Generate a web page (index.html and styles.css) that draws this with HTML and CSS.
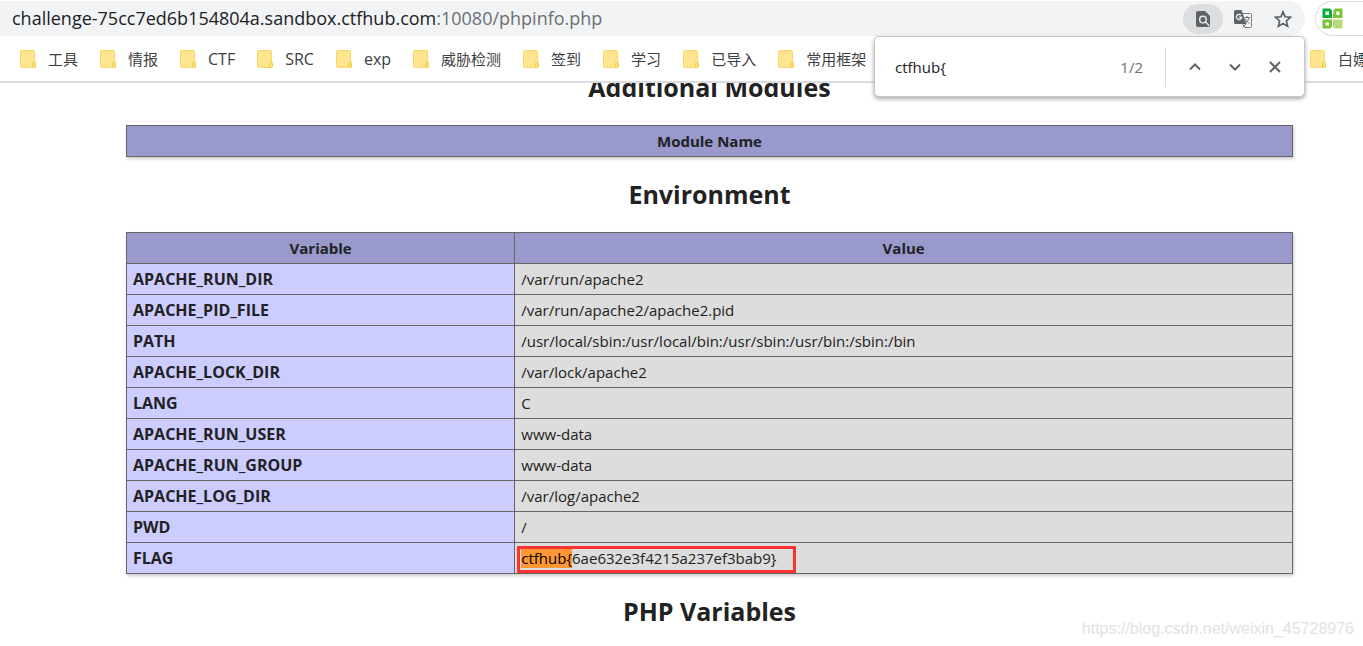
FILE: index.html
```html
<!DOCTYPE html>
<html lang="zh-CN">
<head>
<meta charset="utf-8">
<title>phpinfo()</title>
<link rel="stylesheet" href="styles.css">
</head>
<body>
<svg class="defs" width="0" height="0" aria-hidden="true">
  <symbol id="folder" viewBox="0 0 16 18">
    <path d="M1.5.5h12a1 1 0 0 1 1 1V12a1.500 1.500 0 0 1 1 1.500V16a1.500 1.500 0 0 1-1.500 1.500H1.500a1 1 0 0 1-1-1v-15a1 1 0 0 1 1-1z" fill="#ffe58f" stroke="#f9d768"/>
    <path d="M14.500 12c-1.500 0-2 .8-2 2v2c0 1 .5 1.500 1.500 1.500s1.500-.5 1.500-1.500v-2.500c0-.8-.3-1.300-1-1.500z" fill="#ffe27a" stroke="#f3c93f"/>
  </symbol>
</svg>
<header class="browser">
  <div class="toolbar">
    <div class="omnibox">
      <p class="url">challenge-75cc7ed6b154804a.sandbox.ctfhub.com<span class="path">:10080/phpinfo.php</span></p>
      <button class="tool active" aria-label="Find in page"><svg width="14" height="16" viewBox="0 0 14 16"><path d="M2 0h7l5 5v9.500a1.500 1.500 0 0 1-1.500 1.500H2a2 2 0 0 1-2-2V2a2 2 0 0 1 2-2z" fill="#5f6368"/><circle cx="7" cy="8.500" r="3.300" fill="#5f6368" stroke="#e8eaed" stroke-width="1.500"/><path d="M9.300 10.800l4 4" stroke="#e8eaed" stroke-width="1.500"/></svg></button>
      <button class="tool" aria-label="Translate"><svg width="18" height="18" viewBox="0 0 18 18"><path d="M7 3.500h9.500a1 1 0 0 1 1 1v12a1 1 0 0 1-1 1h-6l-2-4" fill="#f1f3f4" stroke="#7b7f83"/><path d="M1.500 0h6l1 3 4 11h-11A1.500 1.500 0 0 1 0 12.500v-11A1.500 1.500 0 0 1 1.500 0z" fill="#5f6368"/><path d="M7 5.200A2.600 2.600 0 1 0 7.600 7.200H5" fill="none" stroke="#f1f3f4" stroke-width="1.300"/><path d="M10.500 7.500H16M13 6v1.500M15 8c-.5 2-2 4-3.500 5M11.500 9c.8 2 2.500 3.500 4 4.500M9 17l3-3" fill="none" stroke="#6a6e72"/></svg></button>
      <button class="tool" aria-label="Bookmark this page"><svg width="18" height="18" viewBox="0 0 18 18"><path d="M9 1.800l2.100 5 5.400.5-4.100 3.600 1.200 5.300L9 13.400l-4.600 2.800 1.200-5.300-4.100-3.600 5.400-.5z" fill="none" stroke="#5f6368" stroke-width="1.700"/></svg></button>
    </div>
    <div class="extension">
      <svg width="21" height="21" viewBox="0 0 21 21"><path d="M2 2h5.500l1 1v5.500H2z" fill="none" stroke="#0caa41" stroke-width="3"/><path d="M13 3l1-1h5v6.500h-6.500z" fill="none" stroke="#7ac236" stroke-width="3"/><path d="M2 13h6.500v5l-1 1H2z" fill="none" stroke="#7ac236" stroke-width="3"/><path d="M11 11.500h9.500v8l-1 1H13l-2-2z" fill="#b5dc79"/></svg>
    </div>
  </div>
  <nav class="bookmarks" aria-label="Bookmarks">
    <a href="#"><svg><use href="#folder"/></svg>工具</a>
    <a href="#"><svg><use href="#folder"/></svg>情报</a>
    <a href="#" class="latin"><svg><use href="#folder"/></svg>CTF</a>
    <a href="#" class="latin"><svg><use href="#folder"/></svg>SRC</a>
    <a href="#" class="latin"><svg><use href="#folder"/></svg>exp</a>
    <a href="#"><svg><use href="#folder"/></svg>威胁检测</a>
    <a href="#"><svg><use href="#folder"/></svg>签到</a>
    <a href="#"><svg><use href="#folder"/></svg>学习</a>
    <a href="#"><svg><use href="#folder"/></svg>已导入</a>
    <a href="#"><svg><use href="#folder"/></svg>常用框架</a>
    <a href="#" class="last"><svg><use href="#folder"/></svg>白嫖</a>
  </nav>
  <form class="find">
    <input type="text" value="ctfhub{" aria-label="Find">
    <span class="count">1/2</span>
    <div class="find-buttons">
      <button type="button" aria-label="Previous"><svg width="14" height="14" viewBox="0 0 14 14"><path d="M2 9.500l5-5 5 5"/></svg></button>
      <button type="button" aria-label="Next"><svg width="14" height="14" viewBox="0 0 14 14"><path d="M2 4.500l5 5 5-5"/></svg></button>
      <button type="button" aria-label="Close"><svg width="14" height="14" viewBox="0 0 14 14"><path d="M2 2l10 10M12 2L2 12"/></svg></button>
    </div>
  </form>
</header>
<main class="page">
  <h2>Additional Modules</h2>
  <table>
    <thead><tr><th>Module Name</th></tr></thead>
  </table>
  <h2>Environment</h2>
  <table>
    <thead><tr><th class="name">Variable</th><th>Value</th></tr></thead>
    <tbody>
      <tr><th scope="row">APACHE_RUN_DIR</th><td>/var/run/apache2</td></tr>
      <tr><th scope="row">APACHE_PID_FILE</th><td>/var/run/apache2/apache2.pid</td></tr>
      <tr><th scope="row">PATH</th><td>/usr/local/sbin:/usr/local/bin:/usr/sbin:/usr/bin:/sbin:/bin</td></tr>
      <tr><th scope="row">APACHE_LOCK_DIR</th><td>/var/lock/apache2</td></tr>
      <tr><th scope="row">LANG</th><td>C</td></tr>
      <tr><th scope="row">APACHE_RUN_USER</th><td>www-data</td></tr>
      <tr><th scope="row">APACHE_RUN_GROUP</th><td>www-data</td></tr>
      <tr><th scope="row">APACHE_LOG_DIR</th><td>/var/log/apache2</td></tr>
      <tr><th scope="row">PWD</th><td>/</td></tr>
      <tr><th scope="row">FLAG</th><td><span class="flag"><mark>ctfhub{</mark>6ae632e3f4215a237ef3bab9}</span></td></tr>
    </tbody>
  </table>
  <h2>PHP Variables</h2>
</main>
<p class="watermark">https://blog.csdn.net/weixin_45728976</p>
</body>
</html>
```
FILE: styles.css
```css
* { box-sizing: border-box; }
body {
  margin: 0;
  min-height: 100vh;
  position: relative;
  overflow: hidden;
  background: #fff;
  color: #222;
  font: 15px/22px "Open Sans", "Noto Sans CJK SC", sans-serif;
}
.defs { position: absolute; }
button { border: 0; padding: 0; background: none; display: grid; place-items: center; }
p { margin: 0; }

.browser { position: relative; z-index: 1; background: #fff; border-bottom: 2px solid #dadce0; }
.toolbar { display: flex; gap: 10px; padding-top: 1px; }
.omnibox {
  flex: 1;
  display: flex;
  align-items: center;
  height: 35px;
  padding-left: 12px;
  padding-right: 2px;
  background: #f1f3f4;
  border-radius: 0 18px 18px 0;
}
.url { flex: 1; font-size: 18px; line-height: 35px; white-space: nowrap; color: #202124; }
.path { color: #6b6f73; }
.tool { width: 40px; height: 30px; border-radius: 15px; }
.tool.active { background: #dcdee0; }
.extension {
  width: 48px;
  height: 35px;
  padding: 6px;
  border: 1px solid #dadce0;
  border-right: 0;
  border-radius: 18px 0 0 18px;
}
.extension svg { display: block; }

.bookmarks { display: flex; gap: 22px; height: 45px; padding-left: 20px; align-items: center; }
.bookmarks a {
  display: flex;
  align-items: center;
  gap: 12px;
  flex: none;
  color: #3c4043;
  text-decoration: none;
  white-space: nowrap;
}
.bookmarks svg { width: 16px; height: 18px; flex: none; }
.bookmarks .latin { font-size: 16px; }
.bookmarks .last { width: 53px; margin-left: auto; }

.find {
  position: absolute;
  top: 36px;
  right: 58px;
  width: 431px;
  height: 61px;
  display: flex;
  align-items: center;
  padding-left: 20px;
  padding-right: 9px;
  background: #fff;
  border: 1px solid #c8c8c8;
  border-radius: 5px;
  box-shadow: 0 2px 4px rgba(0, 0, 0, .35);
}
.find input { flex: 1; min-width: 0; border: 0; padding: 0; outline: 0; font: inherit; color: #202124; }
.count { color: #6b6f73; padding-right: 22px; }
.find-buttons { display: flex; height: 40px; border-left: 1px solid #dadce0; padding-left: 9px; }
.find-buttons button { width: 40px; }
.find-buttons path { fill: none; stroke: #5f6368; stroke-width: 2; }

.page { margin-top: -13px; padding: 0 70px 0 126px; }
h2 { margin: 20px 0; font-size: 25px; line-height: 35px; font-weight: 700; text-align: center; }
h2:first-child { margin-top: 0; }
table { width: 100%; border-collapse: collapse; box-shadow: 1px 2px 3px #ccc; }
th, td { border: 1px solid #666; padding: 4px 6px; }
th { font-weight: 700; }
thead { background: #9999cc; }
.name { width: 33.3%; }
tbody th { background: #ccccff; text-align: left; font-size: 16px; }
td { background: #ddd; }
.flag { position: relative; }
.flag::after {
  content: "";
  position: absolute;
  inset: -2px -20px -5px -4px;
  border: 3px solid #fb3333;
}
mark { background: #ff9632; color: #000; }

.watermark {
  position: absolute;
  right: 9px;
  bottom: 9px;
  color: #e2e2e2;
  font: 16px/22px "Liberation Sans", Arial, sans-serif;
}
```
